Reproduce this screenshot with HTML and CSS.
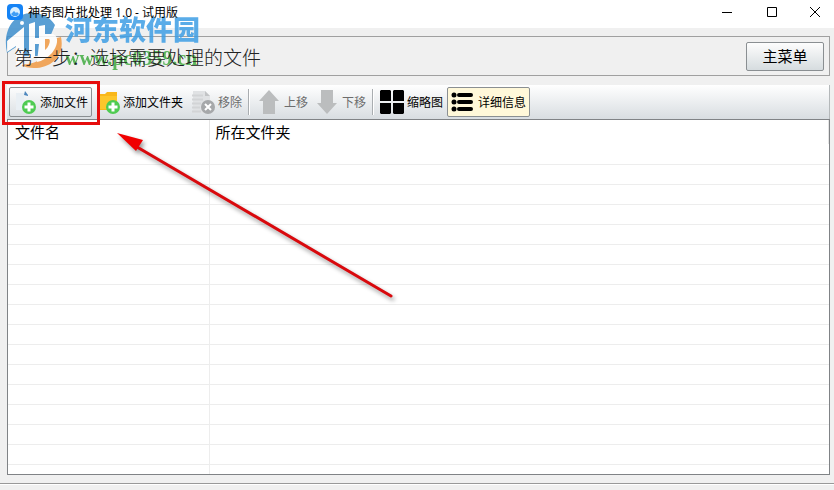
FILE: index.html
```html
<!DOCTYPE html>
<html lang="zh-CN">
<head>
  <meta charset="UTF-8" />
  <meta name="viewport" content="width=device-width,initial-scale=1.0" />
  <title>神奇图片批处理 1.0 - 试用版</title>
  <link rel="stylesheet" href="styles.css">
</head>
<body>
  <header class="titlebar">
    <svg class="app-icon" viewBox="0 0 16 16">
      <rect width="16" height="16" rx="4" fill="#1583f5"/>
      <circle cx="8" cy="8" r="5" fill="#d9efff"/>
      <path d="M4 10l3-3 2 2 1-1 2 2-2 2H6z" fill="#3f9df5"/>
    </svg>
    <span class="title">神奇图片批处理 1.0 - 试用版</span>
    <div class="window-buttons">
      <button type="button" aria-label="最小化"><svg viewBox="0 0 12 12"><path d="M1 6.500h10"/></svg></button>
      <button type="button" aria-label="最大化"><svg viewBox="0 0 12 12"><path d="M1.500 1.500h9v9h-9z"/></svg></button>
      <button type="button" aria-label="关闭"><svg viewBox="0 0 12 12"><path d="M1 1l10 10M11 1L1 11"/></svg></button>
    </div>
  </header>

  <main>
    <section class="step">
      <h1>第一步：选择需要处理的文件</h1>
      <button type="button" class="menu-button">主菜单</button>
    </section>

    <section class="workspace">
      <div class="toolbar">
        <button type="button" class="tool tool-framed tool-marked">
          <svg viewBox="0 0 24 24">
            <path d="M3 3h8v17H3z" fill="#e9eff4"/>
            <path d="M12 1l3 4v1l-4-1z" fill="#4c86bd"/>
            <circle cx="16" cy="17" r="7" fill="#4fcb52"/>
            <path d="M16 12.500v9M11.500 17h9" stroke="#fff" stroke-width="3"/>
          </svg>
          添加文件
        </button>
        <button type="button" class="tool">
          <svg viewBox="0 0 24 24">
            <path d="M1 4h8l2-2h10v18H1z" fill="#f9b71a"/>
            <path d="M4 6h17v13H4z" fill="#fdc62b"/>
            <circle cx="17" cy="17" r="7" fill="#4fcb52"/>
            <path d="M17 12.500v9M12.500 17h9" stroke="#fff" stroke-width="3"/>
          </svg>
          添加文件夹
        </button>
        <button type="button" class="tool" disabled>
          <svg viewBox="0 0 24 24">
            <path d="M2 1h12l5 5v17H2z" fill="#e0e2e4"/>
            <path d="M14 1l5 5h-5z" fill="#c2c4c6"/>
            <path d="M1 5.500h11M1 9.500h11M1 13.500h9M1 17.500h8M1 21.500h9" stroke="#d2d4d6" stroke-width="2"/>
            <circle cx="17" cy="17" r="7" fill="#a6a8aa"/>
            <path d="M14 14l6 6M20 14l-6 6" stroke="#fff" stroke-width="2"/>
          </svg>
          移除
        </button>
        <span class="divider"></span>
        <button type="button" class="tool" disabled>
          <svg viewBox="0 0 24 24"><path d="M12 0l10 11h-4v13H6V11H2z" fill="#bbbdbe"/></svg>
          上移
        </button>
        <button type="button" class="tool" disabled>
          <svg viewBox="0 0 24 24"><path d="M12 24L2 13h4V0h12v13h4z" fill="#bbbdbe"/></svg>
          下移
        </button>
        <span class="divider"></span>
        <button type="button" class="tool tool-view">
          <svg viewBox="0 0 24 24"><path d="M1 0h9l1 1v10H0V1zM14 0h9l1 1v10H13V1zM0 13h11v10l-1 1H1l-1-1zM13 13h11v10l-1 1h-9l-1-1z"/></svg>
          缩略图
        </button>
        <button type="button" class="tool tool-framed tool-active">
          <svg viewBox="0 0 24 24">
            <path d="M8 5h12M8 12h12M8 19h12" stroke="#000" stroke-width="4" stroke-linecap="round"/>
            <circle cx="3" cy="5" r="2.500"/><circle cx="3" cy="12" r="2.500"/><circle cx="3" cy="19" r="2.500"/>
          </svg>
          详细信息
        </button>
      </div>

      <div class="file-list">
        <table>
          <thead>
            <tr><th>文件名</th><th>所在文件夹</th></tr>
          </thead>
          <tbody id="rows"></tbody>
        </table>
      </div>
    </section>
  </main>
  <footer class="statusbar"></footer>

  <div class="watermark">
    <svg viewBox="0 0 58 58">
      <path d="M3 43C-2 20 10 3 28 3c10 0 18 4 23 12L38 46H18l-6-9z" fill="#3e8fcd"/>
      <path d="M57 27c4 18-9 31-27 31-5 0-10-1-14-4 16 2 30-8 33-25z" fill="#f09a43"/>
      <path d="M3 31l17-14v38h-8V36l-9 6z" fill="#fff"/>
      <path d="M25 14l6-2v16h4V16l6-1v9h8c7 3 4 13-1 19-5 5-10 8-15 9l2-18h-4v14h-6z" fill="#fff"/>
      <path d="M41 29h4c2 1 0 8-4 11z" fill="#f09a43"/>
      <circle cx="18" cy="13" r="2" fill="#fff"/>
    </svg>
    <div class="watermark-text">
      <span class="watermark-name">河东软件园</span>
      <span class="watermark-url">www.pc0359.cn</span>
    </div>
  </div>

  <svg class="arrow" viewBox="0 0 280 170">
    <path d="M274 164L20 15" stroke="#d9090d" stroke-width="3" stroke-linecap="round"/>
    <path d="M0 1l26 7-7 11z" fill="#f00000"/>
  </svg>

  <script>
    const ROW_COUNT = 17;
    document.getElementById('rows').innerHTML =
      '<tr><td></td><td></td></tr>'.repeat(ROW_COUNT);
  </script>
</body>
</html>
```

FILE: styles.css
```css
* {
  box-sizing: border-box;
}
body {
  display: flex;
  flex-direction: column;
  height: 100vh;
  margin: 0;
  background: #f0f0f0;
  color: #000;
  font-family: "Open Sans", "Noto Sans CJK SC", sans-serif;
  font-size: 12px;
}
button {
  font: inherit;
  color: inherit;
}
.titlebar {
  display: flex;
  align-items: center;
  height: 28px;
  padding: 0 0 4px 7px;
  gap: 5px;
  background: #fff;
}
/* window texts stay readable over the watermark */
.app-icon, .title, .step h1 {
  position: relative;
  z-index: 1;
}
.app-icon {
  width: 16px;
  height: 16px;
}
.window-buttons {
  display: flex;
  margin-left: auto;
}
.window-buttons button {
  display: flex;
  align-items: center;
  justify-content: center;
  width: 46px;
  height: 24px;
  padding: 0;
  border: none;
  background: none;
}
.window-buttons button:nth-child(2) {
  width: 44px;
}
.window-buttons button:last-child {
  width: 38px;
}
.window-buttons svg {
  width: 12px;
  height: 12px;
  margin-right: 4px;
  fill: none;
  stroke: #000;
}
.window-buttons button:last-child svg {
  margin-right: 0;
}
main {
  flex: 1;
  display: flex;
  flex-direction: column;
  gap: 9px;
  min-height: 0;
  padding: 8px 4px 8px 7px;
}
.step {
  display: flex;
  align-items: center;
  justify-content: space-between;
  height: 40px;
  padding: 0 5px 0 6px;
  border: 1px solid #a0a0a0;
}
.step h1 {
  margin: 0;
  color: #222;
  font-family: "Noto Sans CJK SC", sans-serif;
  font-size: 19px;
  font-weight: 300;
}
.menu-button {
  width: 78px;
  height: 29px;
  padding: 0;
  border: 1px solid #8a8f92;
  border-radius: 2px;
  background: linear-gradient(#fdfdfd, #d6dcdf);
  font-size: 15px;
  line-height: 24px;
}
.workspace {
  flex: 1;
  display: flex;
  flex-direction: column;
  min-height: 0;
}
.toolbar {
  display: flex;
  align-items: center;
  height: 34px;
  padding: 0 2px;
  background: linear-gradient(#fff, #d8dde1);
  border-right: 1px solid #b4b8ba;
}
.tool {
  display: flex;
  align-items: center;
  gap: 3px;
  height: 30px;
  padding: 0 4px;
  border: none;
  background: none;
  white-space: nowrap;
}
.tool svg {
  flex: none;
  width: 24px;
  height: 24px;
}
.tool:disabled {
  padding: 0 3px;
  color: #6d6d6d;
}
.tool:disabled svg {
  margin-left: 1px;
}
.tool-framed {
  border: 1px solid #8a8f92;
  border-radius: 2px;
}
.tool-marked {
  position: relative;
  padding: 0 3px;
}
/* red callout round the add-file button */
.tool-marked::after {
  content: "";
  position: absolute;
  inset: -7px -9px -9px -8px;
  border: 3px solid #e60d0d;
}
.tool-view {
  padding: 0 4px 0 3px;
}
.tool-active {
  padding: 0 3px;
  background: #fff8d9;
}
.divider {
  width: 2px;
  height: 26px;
  margin: 0 3px;
  border-left: 1px solid #a9adb0;
  border-right: 1px solid #fff;
}
.file-list {
  flex: 1;
  min-height: 0;
  overflow: hidden;
  border: 1px solid #808386;
  background: #fff;
}
table {
  width: 100%;
  border-collapse: collapse;
  table-layout: fixed;
}
th {
  height: 24px;
  padding: 0 7px;
  border-right: 1px solid #e4e4e4;
  font-size: 15px;
  font-weight: 400;
  line-height: 24px;
  text-align: left;
  vertical-align: top;
}
th:first-child {
  width: 201px;
}
th:last-child {
  padding-left: 6px;
}
td {
  height: 20px;
  padding: 0;
  border-bottom: 1px solid #ededed;
}
td:first-child {
  border-right: 1px solid #ededed;
}
.statusbar {
  height: 7px;
  border-top: 1px solid #999;
  box-shadow: inset 0 1px #fff;
}
.watermark {
  position: absolute;
  top: 10px;
  left: 4px;
  display: flex;
  gap: 3px;
  opacity: 0.85;
  pointer-events: none;
}
.watermark svg {
  width: 58px;
  height: 58px;
}
.watermark-text {
  display: flex;
  flex-direction: column;
}
.watermark-name {
  color: #3e9ee5;
  font-family: "Noto Sans CJK SC", sans-serif;
  font-size: 27px;
  font-weight: 900;
  line-height: 38px;
}
.watermark-url {
  color: #42ac42;
  font-family: "Liberation Serif", serif;
  font-size: 20px;
  font-weight: 700;
  line-height: 20px;
}
.arrow {
  position: absolute;
  top: 132px;
  left: 117px;
  width: 280px;
  height: 170px;
  overflow: visible;
  filter: drop-shadow(2px 3px 2px rgba(0, 0, 0, 0.4));
  pointer-events: none;
}
```
